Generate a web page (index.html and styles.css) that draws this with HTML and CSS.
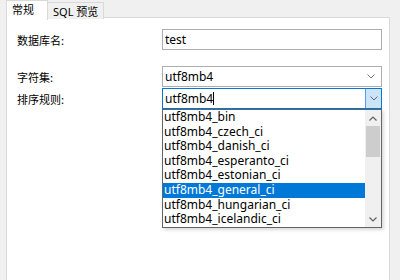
FILE: index.html
```html
<!DOCTYPE html>
<html lang="zh-CN">
<head>
  <meta charset="UTF-8">
  <title>新建数据库</title>
  <link rel="stylesheet" href="styles.css">
</head>
<body>

  <div class="tabs">
    <div class="tab active">常规</div>
    <div class="tab">SQL 预览</div>
  </div>

  <div class="panel">
    <div class="row">
      <label>数据库名:</label>
      <div class="field">test</div>
    </div>

    <div class="row charset">
      <label>字符集:</label>
      <div class="field select">
        <span>utf8mb4</span>
        <svg class="chev" width="8" height="5" viewBox="0 0 8 5"><polyline points="0.5,0.5 4,4 7.5,0.5" fill="none" stroke="#7a7a7a" stroke-width="1"/></svg>
      </div>
    </div>

    <div class="row collation">
      <label>排序规则:</label>
      <div class="field combo">
        <span>utf8mb4</span><span class="caret"></span>
        <span class="drop-btn">
          <svg width="8" height="5" viewBox="0 0 8 5"><polyline points="0.5,0.5 4,4 7.5,0.5" fill="none" stroke="#5a6a7a" stroke-width="1"/></svg>
        </span>

        <div class="list">
          <div class="items">
            <div class="item">utf8mb4_bin</div>
            <div class="item">utf8mb4_czech_ci</div>
            <div class="item">utf8mb4_danish_ci</div>
            <div class="item">utf8mb4_esperanto_ci</div>
            <div class="item">utf8mb4_estonian_ci</div>
            <div class="item selected">utf8mb4_general_ci</div>
            <div class="item">utf8mb4_hungarian_ci</div>
            <div class="item">utf8mb4_icelandic_ci</div>
          </div>
          <div class="scrollbar">
            <div class="arrow">
              <svg width="8" height="5" viewBox="0 0 8 5"><polyline points="0.5,4.5 4,1 7.5,4.5" fill="none" stroke="#606060" stroke-width="1.2"/></svg>
            </div>
            <div class="thumb"></div>
            <div class="track"></div>
            <div class="arrow">
              <svg width="8" height="5" viewBox="0 0 8 5"><polyline points="0.5,0.5 4,4 7.5,0.5" fill="none" stroke="#606060" stroke-width="1.2"/></svg>
            </div>
          </div>
        </div>
      </div>
    </div>
  </div>

</body>
</html>
```

FILE: styles.css
```css
body {
  margin: 0;
  background-color: #f0f0f0;
  font-family: "Noto Sans", "Noto Sans CJK SC", sans-serif;
  font-size: 12px;
  color: #000;
  height: 280px;
  overflow: hidden;
}
.tabs {
  display: flex;
  height: 18px;
  padding-left: 6px;
}
.tab {
  font-size: 11px;
  line-height: 15px;
  padding: 1px 5px 0 5px;
  margin-top: 2px;
  height: 15px;
  border: 1px solid #d9d9d9;
  border-bottom: none;
  border-left: none;
  background-color: #f0f0f0;
}
.tab.active {
  position: relative;
  z-index: 1;
  margin-top: 0;
  height: 18px;
  width: 30px;
  line-height: 16px;
  border-left: 1px solid #d9d9d9;
  background-color: #fff;
}
.panel {
  margin: -1px 10px 0 6px;
  height: 270px;
  background-color: #fff;
  border: 1px solid #d9d9d9;
  padding-top: 11px;
  box-sizing: border-box;
}
.row {
  display: flex;
  align-items: center;
  padding-left: 10px;
}
.row label {
  width: 145px;
  font-size: 11px;
  font-family: "Noto Sans CJK SC", sans-serif;
}
.row.charset {
  margin-top: 16px;
}
.row.collation {
  margin-top: 1px;
}
.field {
  position: relative;
  width: 220px;
  height: 21px;
  box-sizing: border-box;
  border: 1px solid #abadb3;
  padding-left: 2px;
  line-height: 19px;
  display: flex;
  align-items: center;
}
.select .chev {
  margin-left: auto;
  margin-right: 6px;
}
.combo {
  border-color: #0078d7;
}
.caret {
  width: 1px;
  height: 13px;
  background-color: #000;
}
.drop-btn {
  margin-left: auto;
  width: 16px;
  height: 19px;
  box-sizing: border-box;
  border-left: 1px solid #569de5;
  background-color: #cce4f7;
  display: flex;
  align-items: center;
  justify-content: center;
}
.list {
  position: absolute;
  top: calc(100% + 1px);
  left: -1px;
  right: -1px;
  height: 119px;
  box-sizing: border-box;
  border: 1px solid #646464;
  background-color: #fff;
  display: flex;
  overflow: hidden;
  box-shadow: 2px 2px 3px rgba(0, 0, 0, 0.15);
  z-index: 2;
}
.items {
  flex: 1;
  line-height: 14.6px;
}
.item {
  padding-left: 1px;
  white-space: nowrap;
}
.item.selected {
  background-color: #0078d7;
  color: #fff;
}
.scrollbar {
  width: 16px;
  background-color: #f0f0f0;
  display: flex;
  flex-direction: column;
}
.arrow {
  height: 16px;
  display: flex;
  align-items: center;
  justify-content: center;
}
.thumb {
  margin: 0 1px;
  height: 31px;
  background-color: #cdcdcd;
}
.track {
  flex: 1;
}
```
